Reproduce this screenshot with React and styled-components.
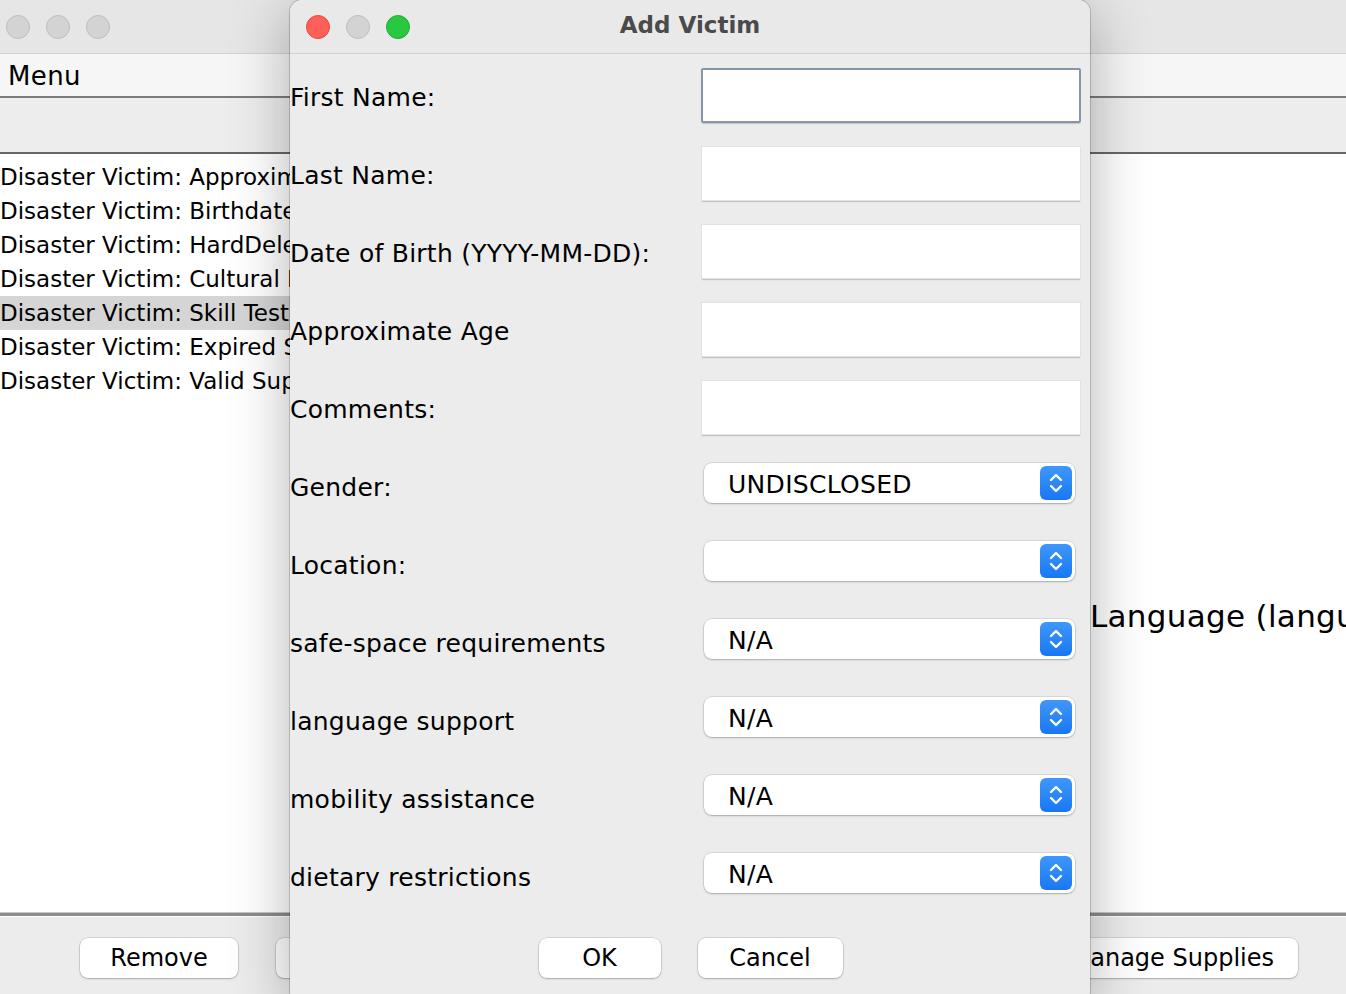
import styled, { createGlobalStyle } from "styled-components";

const GlobalStyle = createGlobalStyle`
  html, body {
    margin: 0;
    padding: 0;
    overflow: hidden;
  }
  body {
    font-family: "DejaVu Sans", "Liberation Sans", sans-serif;
    color: #000;
  }
`;

const Desktop = styled.div`
  position: relative;
  width: 1346px;
  height: 994px;
  overflow: hidden;
  background: #fff;
`;

const MainWindow = styled.div`
  display: flex;
  flex-direction: column;
  width: 100%;
  height: 100%;
`;

const TitleBar = styled.div`
  display: flex;
  align-items: center;
  gap: 16px;
  height: 54px;
  padding-left: ${(p) => p.$pad || 6}px;
  background: ${(p) => p.$bg || "#e6e6e6"};
  border-bottom: 1px solid #d2d2d2;
  box-sizing: border-box;
  flex-shrink: 0;
  position: relative;
`;

const Light = styled.span`
  width: 24px;
  height: 24px;
  border-radius: 50%;
  box-sizing: border-box;
  background: ${(p) => p.$color};
  border: 1px solid ${(p) => p.$edge};
`;

const MenuBar = styled.div`
  display: flex;
  align-items: center;
  height: 44px;
  padding: 2px 0 0 8px;
  font-size: 26px;
  letter-spacing: 0.4px;
  background: #f6f6f6;
  border-bottom: 2px solid #7b7b7b;
  box-sizing: border-box;
  flex-shrink: 0;
`;

const ToolBar = styled.div`
  height: 56px;
  background: #ededed;
  border-bottom: 2px solid #666;
  box-shadow: 0 1px 0 #c9c9c9;
  box-sizing: border-box;
  flex-shrink: 0;
`;

const Content = styled.div`
  flex: 1;
  display: flex;
  background: #fff;
  padding-top: 6px;
  border-bottom: 1px solid #c6c6c6;
  box-shadow: 0 3px 0 #8c8c8c;
  margin-bottom: 4px;
`;

const VictimList = styled.div`
  width: 300px;
  display: flex;
  flex-direction: column;
`;

const ListItem = styled.div`
  height: 34px;
  line-height: 34px;
  font-size: 23px;
  white-space: nowrap;
  overflow: hidden;
  background: ${(p) => (p.$selected ? "#d5d5d5" : "transparent")};
`;

const DetailPanel = styled.div`
  flex: 1;
  padding: 438px 0 0 790px;
  white-space: nowrap;
  overflow: hidden;
  font-size: 31px;
  letter-spacing: 0.3px;
`;

const BottomBar = styled.div`
  display: flex;
  align-items: flex-start;
  gap: 38px;
  height: 77px;
  padding: 21px 48px 0 80px;
  background: #ececec;
  box-sizing: border-box;
  flex-shrink: 0;
`;

const PushButton = styled.button`
  height: 40px;
  min-width: ${(p) => p.$min || 0}px;
  padding: 0 24px;
  margin-left: ${(p) => (p.$push ? "auto" : "0")};
  border: none;
  border-radius: 8px;
  background: #fff;
  box-shadow: 0 0 0 0.5px rgba(0, 0, 0, 0.18), 0 1px 2px rgba(0, 0, 0, 0.22);
  font-family: "DejaVu Sans", "Liberation Sans", sans-serif;
  font-size: 24px;
  color: #000;
`;

const Dialog = styled.div`
  position: absolute;
  left: 290px;
  top: 0;
  width: 800px;
  height: 1004px;
  display: flex;
  flex-direction: column;
  background: #ececec;
  border-radius: 12px;
  overflow: hidden;
  box-shadow: 0 0 0 1px rgba(0, 0, 0, 0.18), 0 10px 60px rgba(0, 0, 0, 0.3);
`;

const DialogTitle = styled.div`
  position: absolute;
  left: 0;
  right: 0;
  top: 0;
  height: 50px;
  line-height: 50px;
  text-align: center;
  font-size: 23px;
  font-weight: bold;
  color: #4a4a4a;
  pointer-events: none;
`;

const Form = styled.div`
  display: grid;
  grid-template-columns: 411px 380px;
  grid-auto-rows: 78px;
  padding-top: 4px;
`;

const Label = styled.div`
  display: flex;
  align-items: center;
  font-size: 25px;
  letter-spacing: 0.25px;
  white-space: nowrap;
`;

const FieldCell = styled.div`
  display: flex;
  align-items: center;
`;

const TextField = styled.div`
  width: 380px;
  height: 55px;
  box-sizing: border-box;
  background: #fff;
  border: ${(p) => (p.$focused ? "2px solid #8696a8" : "1px solid #e2e2e2")};
  border-radius: ${(p) => (p.$focused ? "2px" : "0")};
  box-shadow: 0 2px 1px -1px #c4c4c4;
  margin-top: -4px;
`;

const Combo = styled.div`
  position: relative;
  display: flex;
  align-items: center;
  width: 371px;
  height: 40px;
  margin-left: 3px;
  margin-top: -8px;
  padding: 3px 0 0 24px;
  box-sizing: border-box;
  background: #fff;
  border-radius: 8px;
  box-shadow: 0 0 0 0.5px rgba(0, 0, 0, 0.16), 0 1px 2px rgba(0, 0, 0, 0.22);
  font-size: 25px;
  letter-spacing: 0.3px;
`;

const Stepper = styled.span`
  position: absolute;
  right: 3px;
  top: 3px;
  width: 32px;
  height: 34px;
  border-radius: 6px;
  background: linear-gradient(#3f97fb, #1878f3);
  display: flex;
  align-items: center;
  justify-content: center;
`;

const DialogButtons = styled.div`
  display: flex;
  justify-content: center;
  gap: 37px;
  padding-top: 22px;
  padding-left: 1px;
`;

function Chevrons() {
  return (
    <svg width="16" height="26" viewBox="0 0 16 26" fill="none">
      <path
        d="M3 10 L8 5 L13 10"
        stroke="#fff"
        strokeWidth="2.4"
        strokeLinecap="round"
        strokeLinejoin="round"
      />
      <path
        d="M3 16 L8 21 L13 16"
        stroke="#fff"
        strokeWidth="2.4"
        strokeLinecap="round"
        strokeLinejoin="round"
      />
    </svg>
  );
}

const victims = [
  "Disaster Victim: Approximate Age Test",
  "Disaster Victim: Birthdate Test",
  "Disaster Victim: HardDelete Test",
  "Disaster Victim: Cultural Requirements",
  "Disaster Victim: Skill Test",
  "Disaster Victim: Expired Supplies",
  "Disaster Victim: Valid Supplies",
];

const textFields = [
  "First Name:",
  "Last Name:",
  "Date of Birth (YYYY-MM-DD):",
  "Approximate Age",
  "Comments:",
];

const combos = [
  ["Gender:", "UNDISCLOSED"],
  ["Location:", ""],
  ["safe-space requirements", "N/A"],
  ["language support", "N/A"],
  ["mobility assistance", "N/A"],
  ["dietary restrictions", "N/A"],
];

export default function App() {
  return (
    <Desktop>
      <GlobalStyle />
      <MainWindow>
        <TitleBar>
          <Light $color="#d3d3d3" $edge="#bebebe" />
          <Light $color="#d3d3d3" $edge="#bebebe" />
          <Light $color="#d3d3d3" $edge="#bebebe" />
        </TitleBar>
        <MenuBar>Menu</MenuBar>
        <ToolBar />
        <Content>
          <VictimList>
            {victims.map((v, i) => (
              <ListItem key={v} $selected={i === 4}>
                {v}
              </ListItem>
            ))}
          </VictimList>
          <DetailPanel>Language (language support): N/A</DetailPanel>
        </Content>
        <BottomBar>
          <PushButton $min={158}>Remove</PushButton>
          <PushButton $min={158}>Add Victim</PushButton>
          <PushButton $push>Manage Supplies</PushButton>
        </BottomBar>
      </MainWindow>

      <Dialog>
        <TitleBar $pad={16} $bg="#e9e9e9">
          <Light $color="#fe5f57" $edge="#e5493f" />
          <Light $color="#d3d3d3" $edge="#bebebe" />
          <Light $color="#28c840" $edge="#1fad33" />
          <DialogTitle>Add Victim</DialogTitle>
        </TitleBar>
        <Form>
          {textFields.map((label, i) => (
            <>
              <Label key={label}>{label}</Label>
              <FieldCell key={label + "-f"}>
                <TextField $focused={i === 0} />
              </FieldCell>
            </>
          ))}
          {combos.map(([label, value]) => (
            <>
              <Label key={label}>{label}</Label>
              <FieldCell key={label + "-c"}>
                <Combo>
                  {value}
                  <Stepper>
                    <Chevrons />
                  </Stepper>
                </Combo>
              </FieldCell>
            </>
          ))}
        </Form>
        <DialogButtons>
          <PushButton $min={122}>OK</PushButton>
          <PushButton $min={145}>Cancel</PushButton>
        </DialogButtons>
      </Dialog>
    </Desktop>
  );
}
